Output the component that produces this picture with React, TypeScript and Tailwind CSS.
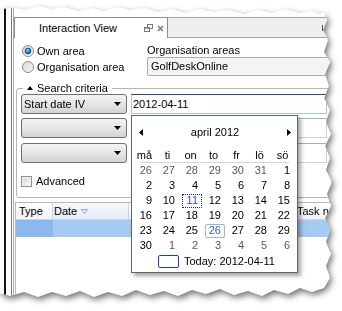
import type { ReactNode } from "react"

type Day = { n: number; other?: boolean }

const WEEKDAYS = ["må", "ti", "on", "to", "fr", "lö", "sö"]

// april 2012 opens on a sunday: six trailing days of march, then six of may
const DAYS: Day[] = [
  ...[26, 27, 28, 29, 30, 31].map((n) => ({ n, other: true })),
  ...Array.from({ length: 30 }, (_, i) => ({ n: i + 1 })),
  ...[1, 2, 3, 4, 5, 6].map((n) => ({ n, other: true })),
]

function Radio({ checked }: { checked?: boolean }) {
  return (
    <svg width="12" height="12" viewBox="0 0 12 12" aria-hidden>
      <defs>
        <linearGradient id="radioFill" x1="0" y1="0" x2="1" y2="1">
          <stop offset="0" stopColor="#d4d4d4" />
          <stop offset="1" stopColor="#fbfbfb" />
        </linearGradient>
        <radialGradient id="radioDot" cx="0.45" cy="0.4" r="0.6">
          <stop offset="0" stopColor="#9fd5ff" />
          <stop offset="0.55" stopColor="#2a7fd4" />
          <stop offset="1" stopColor="#0d3a78" />
        </radialGradient>
      </defs>
      <circle cx="6" cy="6" r="5.5" fill="url(#radioFill)" stroke="#8c8e90" />
      {checked && <circle cx="6" cy="6" r="3" fill="url(#radioDot)" stroke="#1c3f6e" strokeWidth="0.6" />}
    </svg>
  )
}

function Combo({ children }: { children?: ReactNode }) {
  return (
    <div className="flex h-[20px] w-[106px] shrink-0 items-center justify-between rounded-[3px] border border-[#707070] bg-gradient-to-b from-[#f3f3f3] via-[#e6e6e6] to-[#d3d3d3] pl-[2px] pr-[5px]">
      <span>{children}</span>
      <svg width="7" height="4" viewBox="0 0 7 4" aria-hidden>
        <polygon points="0,0 7,0 3.5,4" fill="#000" />
      </svg>
    </div>
  )
}

function Calendar() {
  return (
    <div className="absolute left-[131px] top-[115px] flex h-[158px] w-[167px] flex-col border border-[#646464] bg-white text-[11px] shadow-[3px_3px_4px_rgba(0,0,0,0.35)]">
      <div className="mt-[9px] flex h-[14px] items-center justify-between pl-[7px] pr-[6px]">
        <svg width="4" height="7" viewBox="0 0 4 7" aria-hidden>
          <polygon points="4,0 4,7 0,3.5" fill="#000" />
        </svg>
        <span>april 2012</span>
        <svg width="4" height="7" viewBox="0 0 4 7" aria-hidden>
          <polygon points="0,0 0,7 4,3.5" fill="#000" />
        </svg>
      </div>

      <div className="ml-[4px] mt-[9px] grid h-[14px] grid-cols-[repeat(7,23px)] items-center">
        {WEEKDAYS.map((d) => (
          <span key={d} className="pr-[6px] text-center">
            {d}
          </span>
        ))}
      </div>
      <div className="mx-[8px] h-px bg-[#d6d6d6]" />

      <div className="ml-[4px] grid grid-cols-[repeat(7,23px)] auto-rows-[15px]">
        {DAYS.map((d, i) => {
          const focus = !d.other && d.n === 11
          const hot = !d.other && d.n === 26
          return (
            <div key={i} className="flex items-center justify-end pr-[3px]">
              <span
                className={
                  "flex h-[14px] w-[22px] items-center justify-end border pr-[3px] " +
                  (focus
                    ? "border-dotted border-[#1d2b4d] text-[#1f4fc2]"
                    : hot
                      ? "rounded-[2px] border-[#94b6e2] text-[#2d62b4]"
                      : d.other
                        ? "border-transparent text-[#585858]"
                        : "border-transparent")
                }
              >
                {d.n}
              </span>
            </div>
          )
        })}
      </div>

      <div className="mt-[2px] flex h-[13px] items-center pl-[26px]">
        <span className="mr-[5px] h-[13px] w-[21px] rounded-[2px] border border-[#1540b8]" />
        <span>Today: 2012-04-11</span>
      </div>
    </div>
  )
}

export default function App() {
  return (
    <div className="h-[311px] w-[342px] overflow-hidden bg-white font-['Liberation_Sans',Arial,sans-serif] text-[11px] leading-none text-black">
      <div className="h-full w-full [filter:drop-shadow(2px_3px_3px_rgba(0,0,0,0.55))]">
        <div className="relative flex h-full w-full bg-white [clip-path:polygon(0px_9px,14px_8px,26px_10px,38px_6px,52px_9px,64px_7px,78px_11px,92px_8px,104px_11px,118px_7px,130px_10px,146px_8px,158px_12px,172px_9px,186px_13px,200px_9px,214px_12px,228px_10px,244px_14px,258px_10px,272px_13px,286px_9px,300px_13px,312px_11px,320px_14px,324px_12px,327px_20px,323px_30px,328px_40px,324px_52px,330px_62px,325px_74px,329px_86px,324px_98px,330px_110px,326px_122px,331px_134px,325px_146px,330px_158px,326px_170px,332px_182px,327px_194px,331px_206px,325px_218px,330px_230px,326px_242px,331px_254px,326px_266px,330px_278px,324px_288px,312px_292px,300px_288px,288px_294px,274px_290px,262px_296px,248px_291px,234px_295px,220px_289px,206px_294px,192px_290px,178px_296px,164px_291px,150px_295px,136px_290px,122px_296px,108px_292px,94px_297px,80px_291px,66px_296px,52px_292px,38px_297px,24px_292px,10px_296px,0px_293px)]">
          {/* window frames to the left */}
          <div className="flex shrink-0">
            <div className="w-[4px]" />
            <div className="w-[2px] bg-[#141414]" />
            <div className="w-[5px]" />
            <div className="w-px bg-[#7b7b7b]" />
            <div className="w-px" />
            <div className="w-px bg-[#ababab]" />
          </div>

          <main className="flex w-[328px] shrink-0 flex-col pt-[17px]">
            {/* Tab strip */}
            <div className="flex h-[21px]">
              <div className="flex w-[154px] shrink-0 items-center border-x border-t border-[#8d8d8d] bg-white pr-[3px]">
                <span className="pl-[24px]">Interaction View</span>
                <div className="ml-auto flex items-center gap-[4px]">
                  <svg width="9" height="8" viewBox="0 0 9 8" aria-hidden>
                    <rect x="3.5" y="0.5" width="5" height="4" fill="none" stroke="#7a7a7a" />
                    <rect x="0.5" y="3.5" width="5" height="4" fill="#fff" stroke="#7a7a7a" />
                    <line x1="0.5" y1="4.2" x2="5.5" y2="4.2" stroke="#7a7a7a" />
                  </svg>
                  <svg width="7" height="7" viewBox="0 0 7 7" aria-hidden>
                    <path d="M1 1l5 5M6 1l-5 5" stroke="#7f7f7f" strokeWidth="1.7" />
                  </svg>
                </div>
              </div>
              <div className="flex flex-1 items-center border-y border-[#a3a3a3] bg-[#efefef] pl-[154px]">
                <div className="h-[6px] w-px bg-[#4a4a4a]" />
              </div>
            </div>

            <div className="flex flex-col pl-[2px] pt-[5px]">
              {/* Area choice */}
              <div className="flex">
                <div className="flex w-[131px] shrink-0 flex-col pl-[6px]">
                  <label className="flex h-[16px] items-center gap-[3px]">
                    <Radio checked />
                    Own area
                  </label>
                  <label className="flex h-[16px] items-center gap-[3px]">
                    <Radio />
                    Organisation area
                  </label>
                </div>
                <div className="flex flex-col">
                  <span className="h-[14px] leading-[14px]">Organisation areas</span>
                  <div className="flex h-[19px] w-[185px] items-center rounded-[2px] border border-[#ababab] bg-[#f4f4f4] pl-[3px]">
                    GolfDeskOnline
                  </div>
                </div>
              </div>

              {/* Search criteria */}
              <fieldset className="mt-[6px] w-[316px] rounded-[3px] border border-[#b5b5b5] px-[4px] pb-[9px]">
                <legend className="ml-[2px] px-[4px]">
                  <span className="flex h-[12px] items-center gap-[4px]">
                    <svg width="6" height="4" viewBox="0 0 6 4" aria-hidden>
                      <polygon points="0,4 6,4 3,0" fill="#000" />
                    </svg>
                    Search criteria
                  </span>
                </legend>
                <div className="flex flex-col">
                  <div className="flex h-[20px] gap-[4px]">
                    <Combo>Start date IV</Combo>
                    <div className="flex flex-1 items-center border border-[#a6c4e6] border-t-[#1c4c88] bg-white pl-[1px]">
                      2012-04-11
                    </div>
                  </div>
                  <div className="mt-[4px] flex h-[20px] gap-[4px]">
                    <Combo />
                    <div className="flex-1 border border-[#d0d2d8] border-t-[#abadb3] bg-white" />
                  </div>
                  <div className="mt-[5px] flex h-[20px] gap-[4px]">
                    <Combo />
                    <div className="flex-1 border border-[#d0d2d8] border-t-[#abadb3] bg-white" />
                  </div>
                  <label className="mt-[12px] flex h-[13px] items-center gap-[4px]">
                    <span className="h-[11px] w-[11px] border border-[#8e8f8f] bg-gradient-to-br from-[#d6d6d6] to-[#f8f8f8] shadow-[inset_0_0_0_1px_#f4f4f4]" />
                    Advanced
                  </label>
                </div>
              </fieldset>

              {/* Result list */}
              <div className="ml-[-1px] mt-[4px] flex w-[320px] flex-col overflow-hidden border-l border-t border-[#b9b9b9]">
                <div className="flex h-[17px] border-b border-[#d5d5d5] bg-gradient-to-b from-white to-[#f1f2f4] whitespace-nowrap">
                  <div className="flex w-[37px] shrink-0 items-center border-r border-[#d5d5d5] pl-[3px]">Type</div>
                  <div className="flex w-[76px] shrink-0 items-center gap-[4px] border-r border-[#c6d4e6] bg-gradient-to-b from-[#f6f9fd] to-[#e3edf9] pl-[1px]">
                    Date
                    <svg width="7" height="5" viewBox="0 0 7 5" aria-hidden>
                      <polygon points="0.5,0.5 6.5,0.5 3.5,4.5" fill="#eef2f7" stroke="#9ea9b8" />
                    </svg>
                  </div>
                  <div className="w-[165px] shrink-0 border-r border-[#d5d5d5]" />
                  <div className="flex shrink-0 items-center pl-[3px]">Task name</div>
                </div>
                <div className="flex h-[17px]">
                  <div className="w-[37px] bg-[#8bb8ee]" />
                  <div className="flex-1 bg-[#a5caf3]" />
                </div>
                <div className="h-[60px]" />
              </div>
            </div>
          </main>

          <Calendar />
        </div>
      </div>
    </div>
  )
}
